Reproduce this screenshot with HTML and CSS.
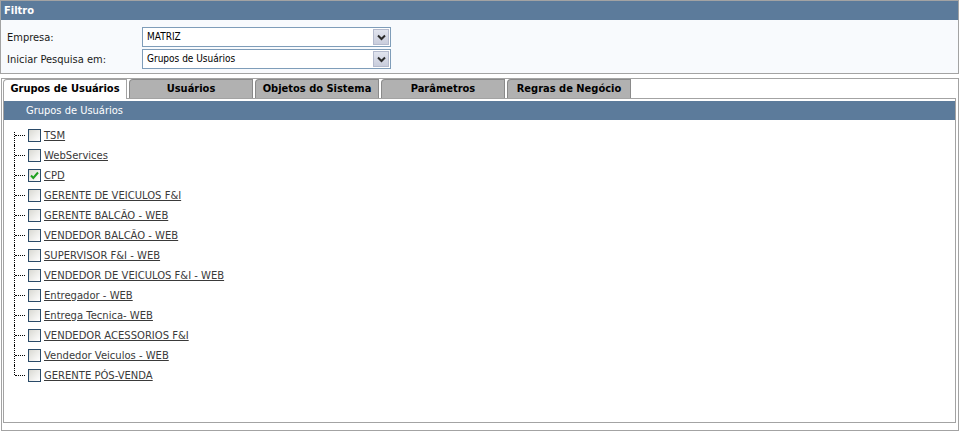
FILE: index.html
```html
<!DOCTYPE html>
<html lang="pt">
<head>
<meta charset="utf-8">
<title>Grupos de Usuários</title>
<link rel="stylesheet" href="styles.css">
</head>
<body>
<div class="filtro">
  <div class="bar bar-filtro">Filtro</div>
  <div class="filtro-body">
    <label class="lbl">Empresa:</label>
    <div class="select"><span class="select-text">MATRIZ</span><span class="select-btn"><svg width="9" height="7" viewBox="0 0 9 7"><path d="M1 1.5 L4.5 5 L8 1.5" fill="none" stroke="#2b2b2b" stroke-width="2"/></svg></span></div>
    <label class="lbl">Iniciar Pesquisa em:</label>
    <div class="select"><span class="select-text">Grupos de Usuários</span><span class="select-btn"><svg width="9" height="7" viewBox="0 0 9 7"><path d="M1 1.5 L4.5 5 L8 1.5" fill="none" stroke="#2b2b2b" stroke-width="2"/></svg></span></div>
  </div>
</div>
<div class="tabs-box">
  <div class="tabstrip">
    <div class="tab active">Grupos de Usuários</div>
    <div class="tab">Usuários</div>
    <div class="tab">Objetos do Sistema</div>
    <div class="tab">Parâmetros</div>
    <div class="tab">Regras de Negócio</div>
  </div>
  <div class="pane">
    <div class="bar bar-pane">Grupos de Usuários</div>
    <ul class="tree">
      <li><span class="cb"></span><a href="#">TSM</a></li>
      <li><span class="cb"></span><a href="#">WebServices</a></li>
      <li><span class="cb"><svg width="11" height="11" viewBox="0 0 11 11"><path d="M2 5.5 L4.3 8 L9 2.5" fill="none" stroke="#21a121" stroke-width="2"/></svg></span><a href="#">CPD</a></li>
      <li><span class="cb"></span><a href="#">GERENTE DE VEICULOS F&amp;I</a></li>
      <li><span class="cb"></span><a href="#">GERENTE BALCÃO - WEB</a></li>
      <li><span class="cb"></span><a href="#">VENDEDOR BALCÃO - WEB</a></li>
      <li><span class="cb"></span><a href="#">SUPERVISOR F&amp;I - WEB</a></li>
      <li><span class="cb"></span><a href="#">VENDEDOR DE VEICULOS F&amp;I - WEB</a></li>
      <li><span class="cb"></span><a href="#">Entregador - WEB</a></li>
      <li><span class="cb"></span><a href="#">Entrega Tecnica- WEB</a></li>
      <li><span class="cb"></span><a href="#">VENDEDOR ACESSORIOS F&amp;I</a></li>
      <li><span class="cb"></span><a href="#">Vendedor Veiculos - WEB</a></li>
      <li><span class="cb"></span><a href="#">GERENTE PÓS-VENDA</a></li>
    </ul>
  </div>
</div>
</body>
</html>
```
FILE: styles.css
```css
* { box-sizing: border-box; }
body {
  margin: 0;
  background: #fff;
  font-family: "DejaVu Sans", Verdana, sans-serif;
  font-size: 10px;
  color: #000;
}
.filtro {
  margin: 0 1px 0 0;
  border: 1px solid #a3a3a3;
}
.bar {
  background: #5c7b9b;
  color: #fff;
  height: 19px;
  line-height: 19px;
  font-family: "DejaVu Sans Condensed", "DejaVu Sans", sans-serif;
  font-size: 11px;
}
.bar-filtro {
  font-weight: bold;
  padding-left: 3px;
}
.filtro-body {
  background: #f8fafd;
  display: grid;
  grid-template-columns: 135px 249px;
  row-gap: 2px;
  align-items: center;
  padding: 7px 0 4px 6px;
}
.lbl {
  font-family: "DejaVu Sans Condensed", "DejaVu Sans", sans-serif;
  font-size: 11px;
  color: #1a1a1a;
}
.select {
  height: 20px;
  border: 1px solid #7f9db9;
  background: #fff;
  display: flex;
  align-items: stretch;
}
.select-text {
  flex: 1;
  padding-left: 4px;
  line-height: 18px;
  font-family: "DejaVu Sans Condensed", "DejaVu Sans", sans-serif;
  font-size: 10px;
  color: #000;
}
.select-btn {
  width: 16px;
  margin: 1px;
  border: 1px solid #b4bacd;
  background: linear-gradient(#e1e4ee, #c9cddc);
  display: flex;
  align-items: center;
  justify-content: center;
}
.tabs-box {
  margin: 4px 1px 0 1px;
  border: 1px solid #a3a3a3;
  padding: 0 2px 7px 1px;
}
.tabstrip {
  display: flex;
  align-items: flex-start;
  gap: 2px;
  height: 19px;
}
.tab {
  width: 124px;
  height: 19px;
  border: 1px solid #8a8a8a;
  border-bottom: none;
  border-top-left-radius: 4px;
  background: #b1b1b1;
  text-align: center;
  line-height: 17px;
  font-family: "DejaVu Sans Condensed", "DejaVu Sans", sans-serif;
  font-weight: bold;
  font-size: 11px;
  color: #000;
}
.tab.active {
  position: relative;
  z-index: 1;
  height: 20px;
  background: #fff;
  border-color: #a3a3a3;
}
.pane {
  height: 325px;
  border: 1px solid #a3a3a3;
  padding-top: 2px;
}
.bar-pane {
  padding-left: 22px;
}
.tree {
  list-style: none;
  margin: 0;
  padding: 5px 0 0 10px;
}
.tree li {
  position: relative;
  height: 20px;
  display: flex;
  align-items: center;
  padding-left: 14px;
}
.tree li::before {
  content: "";
  position: absolute;
  left: 0;
  top: 0;
  bottom: 0;
  border-left: 1px dotted #000;
}
.tree li:first-child::before { top: 7px; }
.tree li:last-child::before { bottom: 10px; }
.tree li::after {
  content: "";
  position: absolute;
  left: 1px;
  top: 10px;
  width: 10px;
  border-top: 1px dotted #000;
}
.cb {
  width: 13px;
  height: 13px;
  border: 1px solid #2a4a68;
  background: linear-gradient(135deg, #d9d9d3, #ffffff);
  margin-right: 3px;
  display: flex;
  align-items: center;
  justify-content: center;
}
.tree a {
  color: #3a3a3a;
  text-decoration: underline;
  font-size: 10px;
}
```
